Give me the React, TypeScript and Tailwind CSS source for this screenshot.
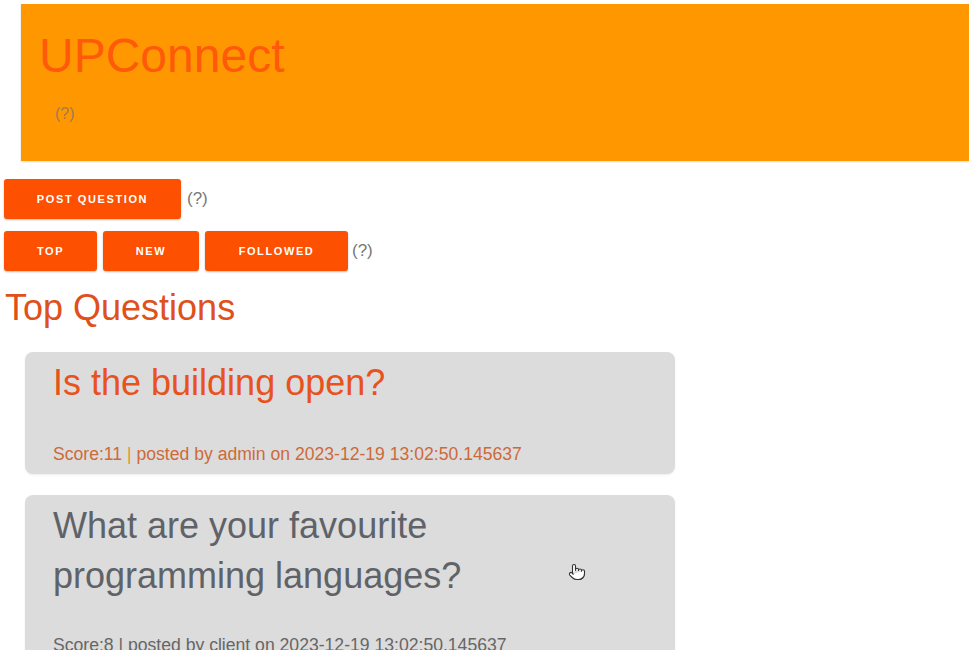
import React from "react";
import { Pointer } from "lucide-react";

const btn =
  "h-10 bg-[#fd5000] text-white text-[11px] font-bold tracking-[1.6px] rounded-[3px] shadow-[0_1px_2px_rgba(0,0,0,0.25)] flex items-center justify-center";

export default function App() {
  return (
    <div className="min-h-[650px] bg-white font-['Liberation_Sans',Arial,sans-serif] relative overflow-hidden">
      <div className="pt-1 pl-[21px]">
        <div className="h-[157px] bg-[#ff9800] pl-[18px] pt-[24px] shadow-[0_1px_2px_rgba(0,0,0,0.15)]">
          <div className="text-[48px] leading-[56px] text-[#ff5a0a]">UPConnect</div>
          <div className="mt-[18px] pl-[16px] text-[16px] text-[#a07a55]">(?)</div>
        </div>
      </div>
      <div className="pl-1 mt-[18px] flex items-center gap-[6px]">
        <button className={btn + " w-[177px]"}>POST QUESTION</button>
        <span className="text-[17px] text-[#777]">(?)</span>
      </div>
      <div className="pl-1 mt-3 flex items-center gap-[6px]">
        <button className={btn + " w-[93px]"}>TOP</button>
        <button className={btn + " w-[96px]"}>NEW</button>
        <button className={btn + " w-[143px]"}>FOLLOWED</button>
        <span className="text-[17px] text-[#777] -ml-[2px]">(?)</span>
      </div>
      <div className="pl-[5px] mt-[17px] text-[36px] leading-[40px] text-[#e0501a]">Top Questions</div>
      <div className="ml-[25px] w-[650px] mt-[24px] flex flex-col gap-[21px]">
        <div className="bg-[#dcdcdc] rounded-[8px] pt-[6px] pb-[10px] pl-[28px] shadow-[0_1px_2px_rgba(0,0,0,0.08)]">
          <div className="text-[36px] leading-[50px] text-[#e8521c]">Is the building open?</div>
          <div className="mt-[36px] text-[17.6px] leading-[20px] text-[#cd6a3a]">
            Score:11 <span className="text-[#f0901a]">|</span> posted by admin on 2023-12-19 13:02:50.145637
          </div>
        </div>
        <div className="bg-[#dcdcdc] rounded-[8px] pt-[6px] pb-[10px] pl-[28px] shadow-[0_1px_2px_rgba(0,0,0,0.08)]">
          <div className="text-[36px] leading-[50px] text-[#5f6368] w-[480px]">What are your favourite programming languages?</div>
          <div className="mt-[34px] text-[17.6px] leading-[20px] text-[#666]">
            Score:8 | posted by client on 2023-12-19 13:02:50.145637
          </div>
        </div>
      </div>
      <Pointer className="absolute left-[568px] top-[563px] text-[#333] fill-white" size={18} strokeWidth={1.5} />
    </div>
  );
}
